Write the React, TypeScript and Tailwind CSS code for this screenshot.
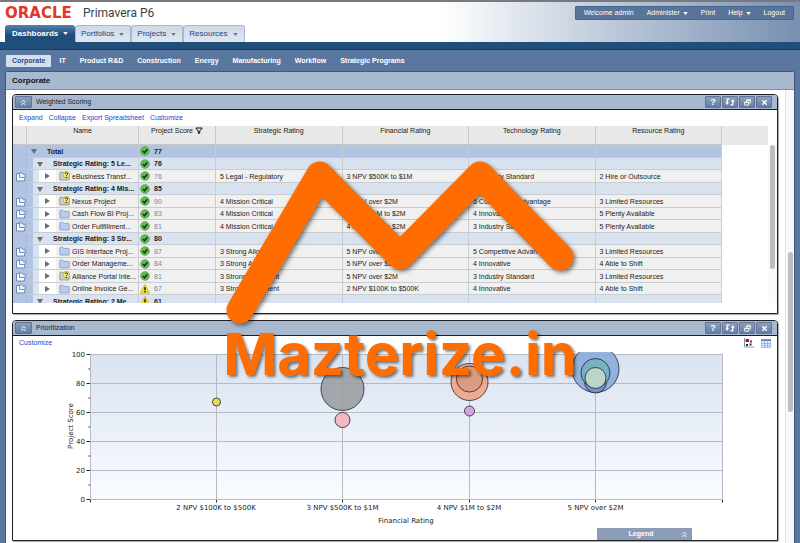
import type { ReactNode } from "react";

type Row = {
  kind: "total" | "group" | "leaf";
  name: string;
  score: number;
  icon?: "folder" | "whatif";
  warn?: boolean;
  ratings?: string[];
};

const ROWS: Row[] = [
  { kind: "total", name: "Total", score: 77 },
  { kind: "group", name: "Strategic Rating: 5 Le...", score: 76 },
  {
    kind: "leaf",
    name: "eBusiness Transf...",
    score: 76,
    icon: "whatif",
    ratings: ["5 Legal - Regulatory", "3 NPV $500K to $1M", "3 Industry Standard", "2 Hire or Outsource"],
  },
  { kind: "group", name: "Strategic Rating: 4 Mis...", score: 85 },
  {
    kind: "leaf",
    name: "Nexus Project",
    score: 90,
    icon: "whatif",
    ratings: ["4 Mission Critical", "5 NPV over $2M", "5 Competitive Advantage", "3 Limited Resources"],
  },
  {
    kind: "leaf",
    name: "Cash Flow BI Proj...",
    score: 83,
    ratings: ["4 Mission Critical", "4 NPV $1M to $2M", "4 Innovative", "5 Plenty Available"],
  },
  {
    kind: "leaf",
    name: "Order Fullfillment...",
    score: 81,
    ratings: ["4 Mission Critical", "4 NPV $1M to $2M", "3 Industry Standard", "5 Plenty Available"],
  },
  { kind: "group", name: "Strategic Rating: 3 Str...", score: 80 },
  {
    kind: "leaf",
    name: "GIS Interface Proj...",
    score: 87,
    ratings: ["3 Strong Alignment", "5 NPV over $2M", "5 Competitive Advantage", "3 Limited Resources"],
  },
  {
    kind: "leaf",
    name: "Order Manageme...",
    score: 84,
    ratings: ["3 Strong Alignment", "5 NPV over $2M", "4 Innovative", "4 Able to Shift"],
  },
  {
    kind: "leaf",
    name: "Alliance Portal Inte...",
    score: 81,
    icon: "whatif",
    ratings: ["3 Strong Alignment", "5 NPV over $2M", "3 Industry Standard", "3 Limited Resources"],
  },
  {
    kind: "leaf",
    name: "Online Invoice Ge...",
    score: 67,
    warn: true,
    ratings: ["3 Strong Alignment", "2 NPV $100K to $500K", "4 Innovative", "4 Able to Shift"],
  },
  { kind: "group", name: "Strategic Rating: 2 Me...", score: 61, warn: true },
];

const TABS = ["Portfolios", "Projects", "Resources"];
const SUBNAV = [
  "IT",
  "Product R&D",
  "Construction",
  "Energy",
  "Manufacturing",
  "Workflow",
  "Strategic Programs",
];
const RATINGS = ["Strategic Rating", "Financial Rating", "Technology Rating", "Resource Rating"];

const ROW_BG = { total: "bg-[#b1c4e3]", group: "bg-[#d9e2ef]", leaf: "bg-[#f0f0f0]" };

function Caret({ className }: { className?: string }) {
  return (
    <svg viewBox="0 0 6 4" className={`h-[3px] w-[5px] ${className ?? ""}`} aria-hidden>
      <path d="M0 0h6L3 4z" fill="currentColor" />
    </svg>
  );
}

function Triangle({ open }: { open: boolean }) {
  return (
    <svg viewBox="0 0 6 6" className="size-[6px]" aria-hidden>
      <path d={open ? "M0 1h6L3 6z" : "M1 0l5 3-5 3z"} fill="#6d6d6d" />
    </svg>
  );
}

function DoubleChevron() {
  return (
    <svg viewBox="0 0 8 8" className="size-[7px]" fill="none" stroke="#fff" strokeWidth="1.1" aria-hidden>
      <path d="M1.5 4L4 1.5 6.500 4M1.500 7L4 4.500 6.500 7" />
    </svg>
  );
}

function StatusIcon({ warn }: { warn?: boolean }) {
  if (warn) {
    return (
      <svg viewBox="0 0 10 10" className="size-[10px] shrink-0" role="img" aria-label="Warning">
        <path d="M5 .6L9.600 9.200H.4z" fill="#f5e51b" stroke="#a89b12" strokeWidth=".6" strokeLinejoin="round" />
        <path d="M5 3.200v3" stroke="#000" strokeWidth="1.400" />
        <circle cx="5" cy="7.800" r=".8" />
      </svg>
    );
  }
  return (
    <svg viewBox="0 0 10 10" className="size-[10px] shrink-0" role="img" aria-label="OK">
      <circle cx="5" cy="5" r="4.300" fill="#5fbf4d" stroke="#5a9c50" strokeWidth=".8" />
      <path d="M2.900 5.100l1.600 1.700 2.800-3.500" fill="none" stroke="#10301a" strokeWidth="1.500" />
    </svg>
  );
}

function ProjectIcon({ whatif }: { whatif: boolean }) {
  return (
    <svg viewBox="0 0 11 10" className="h-[10px] w-[11px] shrink-0" aria-hidden>
      <path
        d="M.8 2.200Q.8 1.200 1.800 1.200h2l1 1.200h4.700q.7 0 .7.700v5.200q0 .700-.7.700H1.500Q.8 9 .8 8.300z"
        fill={whatif ? "#cdd0c2" : "#b9cdeb"}
        stroke={whatif ? "#85887c" : "#7d98c8"}
        strokeWidth=".8"
      />
      {whatif && (
        <g>
          <circle cx="7.300" cy="3.600" r="3.300" fill="#f3ec7c" stroke="#8e8a3a" strokeWidth=".5" />
          <path d="M6 2.900q.2-1.200 1.400-1.200t1.300 1.100q0 .7-.9 1.200-.4.300-.4 1" fill="none" stroke="#222" strokeWidth="1" />
          <circle cx="7.300" cy="6.300" r=".6" />
        </g>
      )}
    </svg>
  );
}

function OpenIcon() {
  return (
    <svg viewBox="0 0 11 10" className="h-[10px] w-[11px] shrink-0" fill="none" aria-hidden>
      <path d="M4.500 1.500h-3v7.500h8V6.500" fill="#fff" stroke="#6a86b8" />
      <path d="M4.500.8v4.700h5.700V2.200H8L7 .8z" fill="#e9f0fa" stroke="#6a86b8" strokeWidth=".9" />
    </svg>
  );
}

function ToolButton({ label, children }: { label: string; children: ReactNode }) {
  return (
    <button
      aria-label={label}
      className="flex h-[12px] w-[16px] items-center justify-center rounded-[1px] border border-[#5f7496] bg-linear-to-b from-[#8c9fbc] to-[#667ea2] text-white"
    >
      {children}
    </button>
  );
}

function Panel({ title, children }: { title: string; children: ReactNode }) {
  return (
    <section
      aria-label={title}
      className="overflow-hidden rounded-t-[4px] border border-[#1c1f26] bg-white shadow-[1px_1px_1px_#aaaaaa]"
    >
      <div className="flex h-[15px] items-center gap-px border-b border-[#1c1f26] bg-[#a8b9cf] pr-[5px] pl-[2px]">
        <button
          aria-label={`Collapse ${title}`}
          className="flex h-[12px] w-[17px] items-center justify-center rounded-[1px] border border-[#5f7496] bg-linear-to-b from-[#8c9fbc] to-[#667ea2]"
        >
          <DoubleChevron />
        </button>
        <h2 className="ml-[3px] flex-1 text-[7px] leading-[10px] text-[#1b1f26]">{title}</h2>
        <ToolButton label="Help">
          <span className="text-[9px] leading-[10px] font-bold">?</span>
        </ToolButton>
        <ToolButton label="Refresh">
          <svg viewBox="0 0 10 8" className="h-[8px] w-[10px]" fill="none" stroke="currentColor" strokeWidth="1.300">
            <path d="M4.500 1.200H2.200V5M5.500 6.800h2.300V3" />
            <path d="M.4 4.200h3.600L2.200 7zM6 3.800h3.600L7.800 1z" fill="currentColor" stroke="none" />
          </svg>
        </ToolButton>
        <ToolButton label="Restore">
          <svg viewBox="0 0 8 8" className="size-[7px]" fill="none" stroke="currentColor">
            <path d="M3 3V1h4.500v3.500H5.500M3 1.300h4.500" />
            <path d="M.8 3.500h4.500V7H.8zM.8 4h4.500" />
          </svg>
        </ToolButton>
        <ToolButton label="Close">
          <svg viewBox="0 0 8 8" className="size-[7px]" fill="none" stroke="currentColor" strokeWidth="1.600">
            <path d="M1.500 1.500l5 5M6.500 1.500l-5 5" />
          </svg>
        </ToolButton>
      </div>
      {children}
    </section>
  );
}

function NameCell({ row }: { row: Row }) {
  if (row.kind === "total") {
    return (
      <div className="flex h-full items-center pl-[4px]">
        <Triangle open />
        <span className="ml-[10px]">{row.name}</span>
      </div>
    );
  }
  if (row.kind === "group") {
    return (
      <div className="flex h-full items-center">
        <div className="h-full w-[6px] bg-[#b1c4e3]" />
        <div className="ml-[4px] flex w-[16px]">
          <Triangle open />
        </div>
        {row.name}
      </div>
    );
  }
  return (
    <div className="flex h-full items-center">
      <div className="h-full w-[6px] bg-[#b1c4e3]" />
      <div className="h-full w-[6px] bg-[#d9e2ef]" />
      <div className="flex h-full w-[17px] items-center justify-center bg-white pr-[2px]">
        <Triangle open={false} />
      </div>
      <div className="mr-[2px] ml-[3px]">
        <ProjectIcon whatif={row.icon === "whatif"} />
      </div>
      {row.name}
    </div>
  );
}

function ScoreTable() {
  const th = "border-r border-b border-[#c8c8c8] p-0 align-top font-normal";
  return (
    <div className="mb-[10px] flex h-[177px] overflow-hidden">
      <table className="w-full flex-1 table-fixed border-separate border-spacing-0 self-start text-[7px] leading-[9px] whitespace-nowrap text-[#1a1a1a]">
        <colgroup>
          <col className="w-[14px]" />
          <col className="w-[112px]" />
          <col className="w-[77px]" />
          {RATINGS.map((r) => (
            <col key={r} />
          ))}
          <col className="w-[46px]" />
        </colgroup>
        <thead>
          <tr className="h-[19px] bg-[#e8e8e8]">
            <th className={th} />
            <th className={th}>Name</th>
            <th className={th}>
              <span className="inline-flex items-center gap-[2px]">
                Project Score
                <svg viewBox="0 0 8 7" className="h-[7px] w-[8px]" fill="none" stroke="#111" aria-hidden>
                  <path d="M.8 1h6.400L4.700 4v2.300H3.300V4z" />
                </svg>
              </span>
            </th>
            {RATINGS.map((r) => (
              <th key={r} className={th}>
                {r}
              </th>
            ))}
            <th className="p-0" />
          </tr>
        </thead>
        <tbody>
          {ROWS.map((row) => {
            const td = `border-r border-b border-[#c9ccd1] p-0 ${ROW_BG[row.kind]}`;
            return (
              <tr
                key={row.name}
                className={`h-[12px] odd:h-[13px] ${row.kind === "leaf" ? "" : "font-bold"}`}
              >
                <td className="h-px border-r border-[#a9bcdc] bg-[#b1c4e3] p-0">
                  <div className="flex h-full items-center justify-end">
                    {row.kind === "leaf" && <OpenIcon />}
                  </div>
                </td>
                <td className={`h-px overflow-hidden ${td}`}>
                  <NameCell row={row} />
                </td>
                <td className={td}>
                  <div className="flex h-[11px] items-center gap-[4px] pl-px">
                    <StatusIcon warn={row.warn} />
                    <span className={row.kind === "leaf" ? "text-[#7484a8]" : ""}>{row.score}</span>
                  </div>
                </td>
                {RATINGS.map((r, i) => (
                  <td key={r} className={`${td} pl-[4px]`}>
                    {row.ratings?.[i]}
                  </td>
                ))}
                <td className="p-0" />
              </tr>
            );
          })}
        </tbody>
      </table>
      <div className="mt-[19px] flex w-[9px] justify-center bg-[#fafafa]">
        <div className="h-[124px] w-[5px] rounded-full bg-[#bdbdbd]" />
      </div>
    </div>
  );
}

const Y_TICKS = [100, 80, 60, 40, 20, 0];
const X_TICKS = ["2 NPV $100K to $500K", "3 NPV $500K to $1M", "4 NPV $1M to $2M", "5 NPV over $2M"];

const BUBBLES = [
  { x: 203, y: 52, r: 4, fill: "#e8d94f" },
  { x: 329, y: 39, r: 21.5, fill: "#999da1" },
  { x: 329, y: 70, r: 7.5, fill: "#f2b3b9" },
  { x: 456, y: 32, r: 18.5, fill: "#f2a184" },
  { x: 456, y: 29, r: 13, fill: "#d69a80" },
  { x: 456, y: 61, r: 5, fill: "#d998e3" },
  { x: 582, y: 19, r: 23.5, fill: "#86aadb" },
  { x: 582, y: 32, r: 11, fill: "#6f8cc9" },
  { x: 582, y: 23, r: 14.5, fill: "#76b0bd" },
  { x: 582, y: 28, r: 10.5, fill: "#c5dccb" },
];

function BubbleChart() {
  return (
    <svg viewBox="0 0 764 178" className="block w-full" role="img" aria-label="Project score by financial rating">
      <defs>
        <linearGradient id="plot" x1="0" y1="0" x2="0" y2="1">
          <stop offset="0" stopColor="#dae3f1" />
          <stop offset="1" stopColor="#f9fbff" />
        </linearGradient>
        <clipPath id="plotClip">
          <rect x="77" y="2" width="633" height="148" />
        </clipPath>
      </defs>
      <rect x="77" y="4" width="632" height="145" fill="url(#plot)" />
      <g stroke="#b4b9c3">
        {Y_TICKS.map((t) => (
          <path key={t} d={`M77 ${149.5 - t * 1.45}H709.5`} />
        ))}
        {[77.5, 203.5, 329.5, 456.5, 582.5, 709.5].map((x) => (
          <path key={x} d={`M${x} 4V149`} />
        ))}
      </g>
      <g stroke="#222">
        {Y_TICKS.map((t) => (
          <path key={t} d={`M73.500 ${149.5 - t * 1.45}H77`} />
        ))}
        {[90, 70, 50, 30, 10].map((t) => (
          <path key={t} d={`M75.500 ${149.5 - t * 1.45}H77`} />
        ))}
        {[77.5, 203.5, 329.5, 456.5, 582.5, 709.5].map((x) => (
          <path key={x} d={`M${x} 150V152.500`} />
        ))}
      </g>
      <g clipPath="url(#plotClip)" stroke="#20242c" strokeWidth=".8">
        {BUBBLES.map((b) => (
          <circle key={`${b.x}-${b.y}`} cx={b.x + 0.5} cy={b.y} r={b.r} fill={b.fill} fillOpacity=".88" />
        ))}
      </g>
      <g className="font-['DejaVu_Sans',sans-serif] text-[7px]" fill="#222">
        {Y_TICKS.map((t) => (
          <text key={t} x="72" y={152 - t * 1.45} textAnchor="end">
            {t}
          </text>
        ))}
        {X_TICKS.map((t, i) => (
          <text key={t} x={203 + i * 126.5} y="160" textAnchor="middle">
            {t}
          </text>
        ))}
        <text x="393" y="173" textAnchor="middle">
          Financial Rating
        </text>
        <text transform="translate(60 76) rotate(-90)" textAnchor="middle">
          Project Score
        </text>
      </g>
    </svg>
  );
}

function Watermark() {
  return (
    <div className="pointer-events-none absolute inset-x-0 top-[150px] flex flex-col items-center text-[#ff6c00]">
      <svg
        viewBox="220 150 360 180"
        className="h-[180px] w-[360px] drop-shadow-[2px_2px_2px_rgba(0,0,0,0.5)]"
        fill="none"
        aria-hidden
      >
        <path
          d="M240 310L319.500 175 400 256 480 175 560 257"
          stroke="currentColor"
          strokeWidth="27"
          strokeLinecap="round"
          strokeLinejoin="round"
        />
      </svg>
      <p className="-mt-[6px] font-['Inter',sans-serif] text-[58px] leading-[60px] font-bold text-shadow-[2px_2px_3px_rgba(0,0,0,0.5)]">
        Mazterize.in
      </p>
    </div>
  );
}

export default function App() {
  return (
    <div className="relative flex min-h-screen flex-col bg-[#5a789f] font-['Liberation_Sans',Arial,sans-serif]">
      <header className="flex h-[42px] justify-between border-t-2 border-[#77797d] bg-linear-to-r from-white from-55% to-[#7890b1]">
        <div className="flex flex-col justify-between">
          <div className="flex h-[22px] items-center pl-[5px] whitespace-nowrap">
            <span className="w-[78px] font-['DejaVu_Sans',sans-serif] text-[15px] leading-[20px] font-bold text-[#e2382c]">
              ORACLE
            </span>
            <span className="font-['Roboto',sans-serif] text-[12px] leading-[20px] text-[#3c3f44]">
              Primavera P6
            </span>
          </div>
          <nav className="flex pl-[5px] text-[8px] leading-[10px]" aria-label="Main">
            <button className="flex h-[17px] w-[70px] items-center justify-between rounded-t-[3px] bg-linear-to-b from-[#5582ae] to-[#1f4c78] to-60% px-[7px] font-bold text-white">
              Dashboards
              <Caret />
            </button>
            {TABS.map((tab) => (
              <button
                key={tab}
                className="flex h-[17px] items-center gap-[5px] rounded-t-[3px] border border-b-0 border-[#a9b8cd] bg-linear-to-b from-[#cfdae8] to-[#dfe6ef] pr-[6px] pl-[5px] text-[#22457c]"
              >
                {tab}
                <Caret className="text-[#6c7685]" />
              </button>
            ))}
          </nav>
        </div>
        <nav
          aria-label="Account"
          className="mt-[4px] mr-[6px] flex h-[14px] items-center gap-[13px] rounded-[1px] border border-[#4a668f] bg-[#587499] px-[8px] text-[7px] leading-[10px] text-white"
        >
          <span>Welcome admin</span>
          <button className="flex items-center gap-[3px]">
            Administer <Caret />
          </button>
          <a href="#print">Print</a>
          <button className="flex items-center gap-[3px]">
            Help <Caret />
          </button>
          <a href="#logout">Logout</a>
        </nav>
      </header>
      <div className="h-[8px] border-b border-[#173c66] bg-[#214f7c]" />

      <nav
        aria-label="Dashboards"
        className="flex h-[21px] items-center gap-[14px] pl-[6px] text-[7px] leading-[10px] font-bold text-white"
      >
        <a
          href="#corporate"
          className="-mr-[6px] rounded-[1px] bg-[#d5e0ee] px-[6px] py-px text-[#2d4b7b]"
        >
          Corporate
        </a>
        {SUBNAV.map((item) => (
          <a key={item} href={`#${item}`}>
            {item}
          </a>
        ))}
      </nav>

      <main className="mx-[5px] flex flex-1 flex-col rounded-t-[3px] border-x border-t border-[#3e5878] bg-white">
        <h1 className="h-[18px] rounded-t-[2px] border-b border-[#7d8fa8] bg-[#a9b9cf] pl-[6px] text-[8px] leading-[17px] font-bold text-[#111]">
          Corporate
        </h1>
        <div className="flex flex-1">
          <div className="flex min-w-0 flex-1 flex-col gap-[6px] pt-[4px] pr-[7px] pb-[2px] pl-[6px]">
            <Panel title="Weighted Scoring">
              <div className="flex h-[16px] items-center gap-[6px] pl-[6px] text-[7px] leading-[10px] text-[#1747cf]">
                <a href="#expand">Expand</a>
                <a href="#collapse">Collapse</a>
                <a href="#export">Export Spreadsheet</a>
                <a href="#customize">Customize</a>
              </div>
              <ScoreTable />
            </Panel>
            <Panel title="Prioritization">
              <div className="flex h-[14px] items-center gap-[7px] pr-[6px] pl-[6px] text-[7px] leading-[10px] text-[#1747cf]">
                <a href="#customize-chart" className="mr-auto">
                  Customize
                </a>
                <button aria-label="Chart view">
                  <svg viewBox="0 0 11 10" className="h-[10px] w-[11px]">
                    <path d="M1.500 0v9H11" fill="none" stroke="#8a94a8" />
                    <path d="M2.500 1h3.500v3H2.500zM7 2.500h2v2H7z" fill="#9b2226" />
                    <path d="M3 6h2v2H3zM6.500 5.500h2v2h-2z" fill="#1f2468" />
                  </svg>
                </button>
                <button aria-label="Table view">
                  <svg viewBox="0 0 10 9" className="h-[9px] w-[10px]">
                    <path d="M.5.5h9v8h-9z" fill="#e8f0fc" />
                    <path d="M0 0h10v2H0z" fill="#4f7ccb" />
                    <path d="M.5.5h9v8h-9zM.5 4.500h9M.5 6.500h9M3.500.5v8M6.500.5v8" fill="none" stroke="#7fa3de" strokeWidth=".7" />
                  </svg>
                </button>
              </div>
              <BubbleChart />
              <button className="mr-[85px] ml-auto flex h-[12px] w-[95px] items-center bg-[#8c9db8] px-[4px] text-[7px] leading-[10px] font-bold text-white">
                <span className="flex-1">Legend</span>
                <DoubleChevron />
              </button>
            </Panel>
          </div>
          <div className="flex w-[9px] justify-center border-l border-[#e4e4e4] bg-[#f8f8f8]">
            <div className="mt-[162px] h-[160px] w-[5px] rounded-full bg-[#bdbdbd]" />
          </div>
        </div>
      </main>
      <Watermark />
    </div>
  );
}
